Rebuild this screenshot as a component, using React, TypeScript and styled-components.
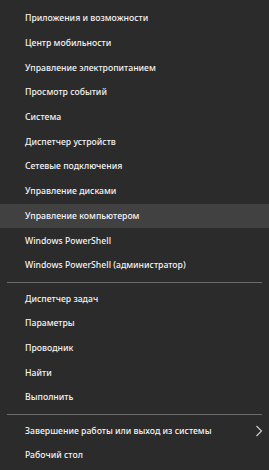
import styled, { createGlobalStyle } from "styled-components";

const GlobalStyle = createGlobalStyle`
  html, body {
    margin: 0;
    padding: 0;
    background: #2b2b2b;
  }
`;

type Entry = { label: string; active?: boolean; sub?: boolean } | "sep";

const entries: Entry[] = [
  { label: "Приложения и возможности" },
  { label: "Центр мобильности" },
  { label: "Управление электропитанием" },
  { label: "Просмотр событий" },
  { label: "Система" },
  { label: "Диспетчер устройств" },
  { label: "Сетевые подключения" },
  { label: "Управление дисками" },
  { label: "Управление компьютером", active: true },
  { label: "Windows PowerShell" },
  { label: "Windows PowerShell (администратор)" },
  "sep",
  { label: "Диспетчер задач" },
  { label: "Параметры" },
  { label: "Проводник" },
  { label: "Найти" },
  { label: "Выполнить" },
  "sep",
  { label: "Завершение работы или выход из системы", sub: true },
  { label: "Рабочий стол" },
];

export default function App() {
  return (
    <>
      <GlobalStyle />
      <Menu>
        {entries.map((e, i) =>
          e === "sep" ? (
            <Separator key={i} />
          ) : (
            <Item key={i} $active={e.active}>
              <Label>{e.label}</Label>
              {e.sub && (
                <Chevron viewBox="0 0 8 12" width="8" height="12">
                  <path d="M1.5 1 L6.5 6 L1.5 11" fill="none" stroke="#d0d0d0" strokeWidth="1.1" />
                </Chevron>
              )}
            </Item>
          )
        )}
      </Menu>
    </>
  );
}

const Menu = styled.div`
  display: flex;
  flex-direction: column;
  width: 269px;
  height: 470px;
  box-sizing: border-box;
  padding-top: 6px;
  background: #2b2b2b;
  font-family: "Noto Sans", "Open Sans", sans-serif;
`;

const Item = styled.div<{ $active?: boolean }>`
  display: flex;
  align-items: center;
  justify-content: space-between;
  height: 24.7px;
  padding: 0 6px 0 25px;
  background: ${(p) => (p.$active ? "#414141" : "transparent")};
`;

const Label = styled.span`
  color: #f4f4f4;
  font-size: 8.7px;
  font-weight: 500;
  white-space: nowrap;
`;

const Chevron = styled.svg`
  display: block;
`;

const Separator = styled.div`
  height: 1px;
  margin: 4px 7px 3.6px 7px;
  background: #6b6b6b;
`;
